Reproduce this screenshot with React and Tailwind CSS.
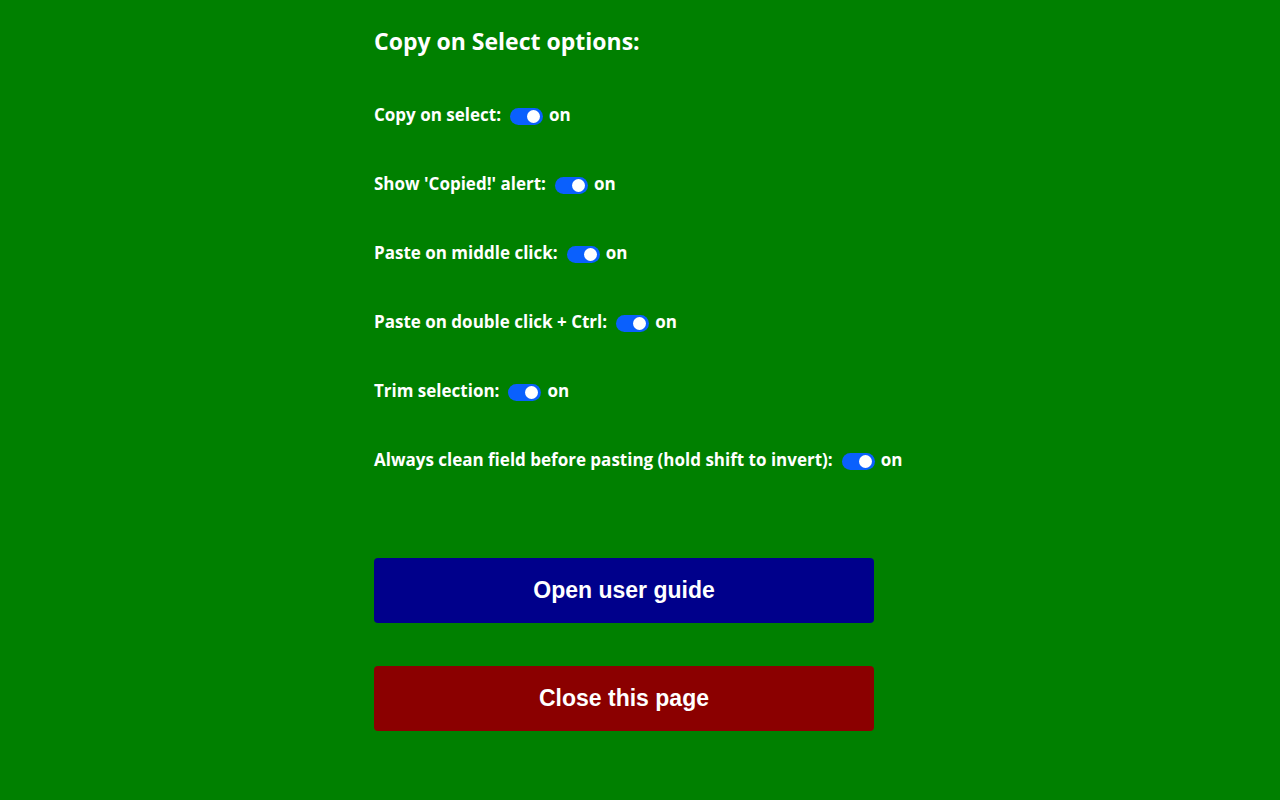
import React, { useState } from "react";

const options = [
  "Copy on select:",
  "Show 'Copied!' alert:",
  "Paste on middle click:",
  "Paste on double click + Ctrl:",
  "Trim selection:",
  "Always clean field before pasting (hold shift to invert):",
];

function Switch({ checked, onChange }) {
  return (
    <button
      type="button"
      onClick={onChange}
      className={`relative block h-[17px] w-[33px] shrink-0 rounded-full ${
        checked ? "bg-[#0a60fd]" : "bg-white"
      }`}
    >
      <span
        className={`absolute top-[2px] h-[13px] w-[13px] rounded-full ${
          checked ? "left-[17px] bg-white" : "left-[2px] bg-gray-400"
        }`}
      />
    </button>
  );
}

export default function App() {
  const [values, setValues] = useState(options.map(() => true));

  const toggle = i =>
    setValues(prev => prev.map((v, idx) => (idx === i ? !v : v)));

  return (
    <div className="min-h-screen bg-[#008000] text-white font-['Open_Sans',sans-serif]">
      <div className="mx-auto w-[532px] pt-[25px]">
        <h2 className="text-[23px] font-bold leading-8">Copy on Select options:</h2>

        <div className="mt-[46px] flex flex-col gap-[45px]">
          {options.map((label, i) => (
            <div key={label} className="flex h-6 items-center text-[17px] font-bold">
              <span>{label}</span>
              <span className="ml-[9px] flex items-center pt-[2px]">
                <Switch checked={values[i]} onChange={() => toggle(i)} />
              </span>
              <span className="ml-[6px]">{values[i] ? "on" : "off"}</span>
            </div>
          ))}
        </div>

        {/* Buttons */}
        <div className="mt-[86px] flex flex-col gap-[43px] font-['Liberation_Sans',sans-serif]">
          <button className="h-[65px] w-[500px] rounded bg-[#00008b] text-[23px] font-bold text-white">
            Open user guide
          </button>
          <button className="h-[65px] w-[500px] rounded bg-[#8b0000] text-[23px] font-bold text-white">
            Close this page
          </button>
        </div>
      </div>
    </div>
  );
}
